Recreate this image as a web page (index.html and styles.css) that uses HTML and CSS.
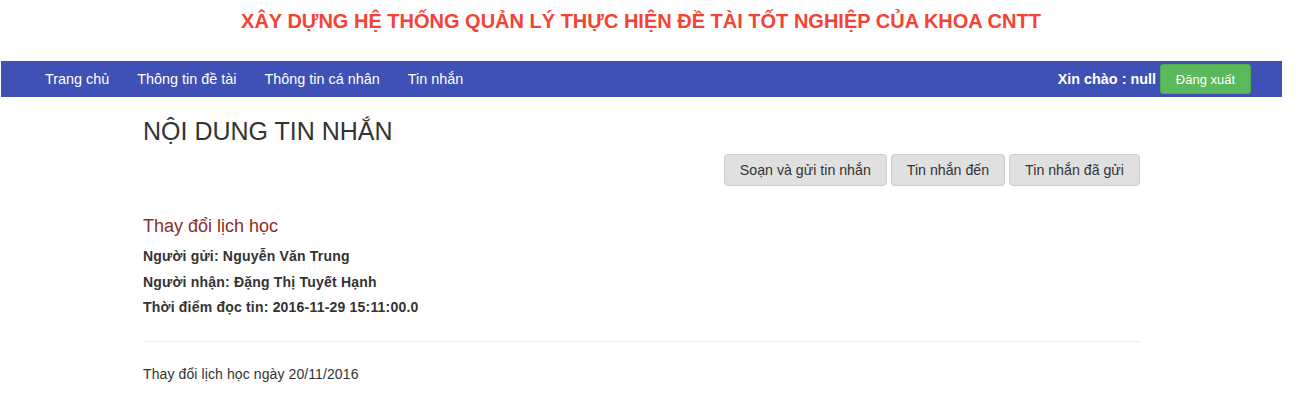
FILE: index.html
```html
<!DOCTYPE html>
<html lang="vi">
<head>
<meta charset="utf-8">
<title>Nội dung tin nhắn</title>
<link rel="stylesheet" href="styles.css">
</head>
<body>
<header class="site-title">XÂY DỰNG HỆ THỐNG QUẢN LÝ THỰC HIỆN ĐỀ TÀI TỐT NGHIỆP CỦA KHOA CNTT</header>
<nav class="navbar">
  <ul class="nav-links">
    <li><a href="#">Trang chủ</a></li>
    <li><a href="#">Thông tin đề tài</a></li>
    <li><a href="#">Thông tin cá nhân</a></li>
    <li><a href="#">Tin nhắn</a></li>
  </ul>
  <div class="nav-user">
    <span class="greeting">Xin chào : null</span>
    <button class="btn-logout">Đăng xuất</button>
  </div>
</nav>
<main class="container">
  <h1 class="page-title">NỘI DUNG TIN NHẮN</h1>
  <div class="actions">
    <button class="btn">Soạn và gửi tin nhắn</button>
    <button class="btn">Tin nhắn đến</button>
    <button class="btn">Tin nhắn đã gửi</button>
  </div>
  <h2 class="subject">Thay đổi lịch học</h2>
  <div class="meta">
    <p>Người gửi: Nguyễn Văn Trung</p>
    <p>Người nhận: Đặng Thị Tuyết Hạnh</p>
    <p>Thời điểm đọc tin: 2016-11-29 15:11:00.0</p>
  </div>
  <hr class="divider">
  <p class="body-text">Thay đổi lịch học ngày 20/11/2016</p>
</main>
</body>
</html>
```

FILE: styles.css
```css
* { box-sizing: border-box; }
body {
  margin: 0;
  width: 1282px;
  font-family: "Liberation Sans", Arial, sans-serif;
  font-size: 14px;
  color: #333;
  background: #fff;
}
.site-title {
  height: 61px;
  padding-top: 10px;
  text-align: center;
  color: #f44336;
  font-weight: bold;
  font-size: 20px;
  line-height: 22px;
}
.navbar {
  margin-left: 1px;
  height: 36px;
  background: #3f51b5;
  display: flex;
  align-items: center;
  justify-content: space-between;
  padding: 0 31px 0 31px;
}
.nav-links {
  list-style: none;
  margin: 0;
  padding: 0;
  display: flex;
}
.nav-links a {
  display: block;
  padding: 0 14px;
  color: #fff;
  text-decoration: none;
  font-size: 14.4px;
  line-height: 36px;
}
.nav-links li:first-child a { padding-left: 13px; }
.nav-user {
  display: flex;
  align-items: center;
  gap: 4px;
}
.greeting {
  color: #fff;
  font-weight: bold;
  font-size: 14.4px;
}
.btn-logout {
  height: 30px;
  width: 91px;
  background: #5cb85c;
  border: 1px solid #4cae4c;
  border-radius: 3px;
  color: #fff;
  font-family: inherit;
  font-size: 13px;
  padding: 0;
}
.container {
  width: 997px;
  margin-left: 143px;
}
.page-title {
  margin: 20px 0 0;
  font-size: 25px;
  font-weight: normal;
  line-height: 28px;
  color: #333;
}
.actions {
  display: flex;
  justify-content: flex-end;
  gap: 4px;
  margin-top: 9px;
}
.btn {
  height: 32px;
  padding: 0 15px;
  background: #e0e0e0;
  border: 1px solid #ccc;
  border-radius: 4px;
  color: #333;
  font-family: inherit;
  font-size: 14.2px;
}
.subject {
  margin: 28px 0 0;
  font-size: 18px;
  font-weight: normal;
  line-height: 24px;
  color: #8b2d2d;
}
.meta { margin-top: 6px; }
.meta p {
  margin: 0;
  font-weight: bold;
  font-size: 14px;
  letter-spacing: 0.2px;
  line-height: 25.5px;
}
.divider {
  margin: 20px 0 0;
  border: 0;
  border-top: 1px solid #eee;
}
.body-text {
  margin: 23px 0 0;
  font-size: 14px;
  letter-spacing: 0.1px;
  line-height: 18px;
}
```
